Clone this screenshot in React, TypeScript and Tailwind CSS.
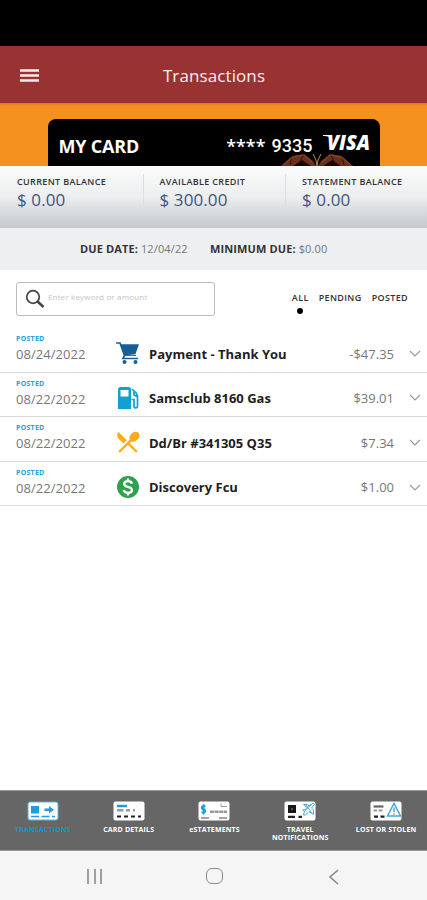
import type { ReactNode } from "react";
import { MdLocalDining } from "react-icons/md";

const balances = [
  { label: "CURRENT BALANCE", value: "$ 0.00" },
  { label: "AVAILABLE CREDIT", value: "$ 300.00" },
  { label: "STATEMENT BALANCE", value: "$ 0.00" },
];

function CartIcon() {
  return (
    <svg width="24" height="24" viewBox="0 0 24 24" fill="none">
      <path d="M0 2h4l4.500 12.500L7 17.500h15" stroke="#145f96" strokeWidth="1.700" />
      <path d="M4.500 3.200H23L19.500 13 8.300 14.500z" fill="#145f96" />
      <path d="M8 14.300h12" stroke="#145f96" strokeWidth="1.200" />
      <circle cx="8.500" cy="21" r="2" fill="#145f96" />
      <circle cx="19.500" cy="21" r="2" fill="#145f96" />
    </svg>
  );
}

function GasIcon() {
  return (
    <svg width="24" height="24" viewBox="0 0 24 24" fill="none">
      <path
        d="M4.500 1h8A2.500 2.500 0 0 1 15 3.500V23H2V3.500A2.500 2.500 0 0 1 4.500 1zM4.500 4v6.500h8V4z"
        fill="#12a0d0"
        fillRule="evenodd"
      />
      <path
        d="m16 3 4.500 4.500 1 3V20c0 2.500-3.500 2.500-3.500 0v-6.500h-2.500M18 5.500V9l3 1.500"
        stroke="#12a0d0"
        strokeWidth="1.700"
      />
    </svg>
  );
}

function CashIcon() {
  return (
    <svg width="24" height="24" viewBox="0 0 24 24" fill="none">
      <circle cx="12" cy="12" r="11" fill="#2fa04e" />
      <path
        d="M16 8.600C15.500 6.800 14 6.200 12 6.200c-2.300 0-3.800 1-3.800 2.700C8.200 13 16 10.800 16 15c0 1.800-1.600 2.800-4 2.800s-3.900-1-4.200-2.900M12 3.500v3M12 17.500v3"
        stroke="#fff"
        strokeWidth="2.300"
      />
    </svg>
  );
}

const transactions = [
  {
    date: "08/24/2022",
    name: "Payment - Thank You",
    amount: "-$47.35",
    icon: <CartIcon />,
  },
  {
    date: "08/22/2022",
    name: "Samsclub 8160 Gas",
    amount: "$39.01",
    icon: <GasIcon />,
  },
  {
    date: "08/22/2022",
    name: "Dd/Br #341305 Q35",
    amount: "$7.34",
    icon: <MdLocalDining size={28} color="#fbac18" className="-ml-0.5" />,
  },
  {
    date: "08/22/2022",
    name: "Discovery Fcu",
    amount: "$1.00",
    icon: <CashIcon />,
  },
];

function CardIcon({ children }: { children: ReactNode }) {
  return (
    <svg width="32" height="20" viewBox="0 0 32 20" fill="none">
      <rect x="0.500" y="0.500" width="31" height="19" rx="2" fill="#fff" />
      {children}
    </svg>
  );
}

const tabs = [
  {
    label: "TRANSACTIONS",
    active: true,
    icon: (
      <svg width="32" height="20" viewBox="0 0 32 20" fill="none">
        <rect x="1" y="1" width="30" height="18" rx="2" fill="#fff" stroke="#55b4e4" />
        <path d="M4 5h8v7.500H4z" fill="#1d9ce0" />
        <path d="M17.500 7.500H22V5l5 3.800-5 3.800v-2.500h-4.500z" fill="#1d9ce0" />
        <path d="M4 15.500h8M14.500 15.500h8M25 15.500h3" stroke="#1d9ce0" strokeWidth="1.600" />
      </svg>
    ),
  },
  {
    label: "CARD DETAILS",
    icon: (
      <CardIcon>
        <path d="M4 5h10" stroke="#1d9ce0" strokeWidth="2.500" />
        <path d="M4 9.300h6.500M13 9.300h4M20 9.300h2" stroke="#999" strokeWidth="2.500" />
        <path d="M4 15.500h4M11 15.500h4M18 15.500h4M25 15.500h3" stroke="#222" strokeWidth="2.200" />
      </CardIcon>
    ),
  },
  {
    label: "eSTATEMENTS",
    icon: (
      <CardIcon>
        <path
          d="M7.500 5.200H5.500C3.300 5.200 3.300 8.200 5.500 8.200S7.700 11.500 5.500 11.500H3.500M5.600 3.200v10.300"
          stroke="#1d9ce0"
          strokeWidth="1.800"
        />
        <path d="M12 10.800h17" stroke="#999" strokeWidth="2.500" strokeDasharray="4 .6" />
        <path d="M28.500 5.500h-5.500V2.500M23 5.500h6" stroke="#999" />
        <path d="M3 17h8M21 17h8" stroke="#888" strokeWidth="1.500" />
      </CardIcon>
    ),
  },
  {
    label: "TRAVEL NOTIFICATIONS",
    icon: (
      <CardIcon>
        <path d="M4 4h8v8H4z" fill="#171717" />
        <path d="M7 7h2v2H7z" fill="#555" />
        <path d="M4 15.800h7M14.500 15.800H18" stroke="#222" strokeWidth="2.200" />
        <path
          d="M19.500 3.500h4l2 2 3.500-3.500 1.500 1.500L27.500 7l2 2v4.500L25 10.500l-3.500 3.500h-2l1-3.500L18.500 9l3-.5 1.500-2zM22 4l6 8M27 3l-7 8"
          stroke="#4ba9dd"
          strokeWidth="1"
        />
      </CardIcon>
    ),
  },
  {
    label: "LOST OR STOLEN",
    icon: (
      <CardIcon>
        <path d="M3.500 5.500h10" stroke="#666" strokeWidth="2.200" />
        <path d="M3.500 9.500h3.500M8.500 9.500h4" stroke="#999" strokeWidth="2.200" />
        <path d="M4 15.700h4M10.500 15.700h4" stroke="#222" strokeWidth="2.200" />
        <path d="M24 2.300 30.500 15H17.500z" fill="#fff" stroke="#45a7de" strokeWidth="1.500" />
        <path d="M24 6.500V11M24 12.200v1.500" stroke="#45a7de" strokeWidth="1.400" />
      </CardIcon>
    ),
  },
];

export default function App() {
  return (
    <div className="flex h-[900px] w-[427px] flex-col overflow-hidden bg-white font-['Open_Sans',sans-serif] text-[#333]">
      <div className="h-[46px] shrink-0 bg-black" />
      <header className="grid h-[57px] shrink-0 grid-cols-[60px_1fr_60px] items-center bg-[#993333] text-white">
        <svg className="mt-0.5 ml-5" width="20" height="14" viewBox="0 0 20 14">
          <path d="M0 1.500h19M0 6.500h19M0 11.500h19" stroke="#f9eaea" strokeWidth="2.300" />
        </svg>
        <h1 className="pt-0.5 pl-px text-center text-[17px] tracking-[0.1px] text-[#f9eded]">Transactions</h1>
      </header>

      <div className="flex h-[63px] shrink-0 justify-center bg-linear-to-b from-[#d67a22] to-[#f5911f] to-5% pt-4">
        <div className="relative flex h-[47px] w-[332px] items-center rounded-t-[8px] bg-black pr-[7px] pl-[11px] text-white">
          {/* butterfly artwork, cropped by the balance bar */}
          <svg className="absolute bottom-0 left-[232px]" width="74" height="14" viewBox="0 0 74 14">
            <path d="M1 14 12 4l12-2 9 7 3 5zM73 14 62 4 50 2l-9 7-3 5z" fill="#6b301c" />
            <path d="m13 14 9-6 9 6M61 14l-9-6-9 6" fill="#150805" />
            <path d="m12 4-2 9M24 2l-4 7M62 4l2 9M50 2l4 7" stroke="#2a100a" />
            <path d="m3 13 10-8 11-2 8 7M71 13 61 5 50 3l-8 7" stroke="#8d492b" fill="none" />
            <path d="m33 2 3 6 1 6 1-6 3-6" stroke="#b78a4c" fill="none" />
          </svg>
          <span className="relative pt-[7px] text-[18px] font-bold tracking-[-0.2px]">MY CARD</span>
          <span className="relative ml-auto pt-[7px] text-[18px] font-semibold">****</span>
          <span className="relative ml-1.5 pt-[6px] font-['Roboto',sans-serif] text-[18px] font-medium">9335</span>
          <svg className="relative ml-[9px] shrink-0" width="51" height="36" viewBox="0 0 51 36">
            <text
              x="5"
              y="25"
              textLength="43"
              lengthAdjust="spacingAndGlyphs"
              fill="#fff"
              className="font-['Open_Sans',sans-serif] text-[21px] font-extrabold italic"
            >
              VISA
            </text>
            <path d="M1 10h8l2 6C9 12 6 11 1 11z" fill="#fff" />
          </svg>
        </div>
      </div>

      <section className="flex h-[62px] shrink-0 bg-linear-to-b from-[#fbfcfc] via-[#eceeef] to-[#c3c8cb] pt-2">
        {balances.map((balance, i) => (
          <div key={balance.label} className="flex w-[142.500px] shrink-0">
            <div className={i ? "h-8 w-px bg-[#dcdfe1]" : "h-8 w-px"} />
            <div className="pl-4">
              <div className="text-[9px] leading-4 font-semibold tracking-[0.35px] whitespace-nowrap">
                {balance.label}
              </div>
              <div className="text-[17px] leading-5 tracking-[0.1px] text-[#42547f]">{balance.value}</div>
            </div>
          </div>
        ))}
      </section>

      <section className="flex h-[42px] shrink-0 items-center bg-[#edeff0] pl-[80px] text-[11px] tracking-[0.12px] text-[#777]">
        <span className="w-[130px]">
          <b className="text-[#333]">DUE DATE:</b> 12/04/22
        </span>
        <span>
          <b className="text-[#333]">MINIMUM DUE:</b> $0.00
        </span>
      </section>

      <div className="flex h-[58px] shrink-0 pr-[19px] pl-4 pt-3">
        <div className="flex h-[34px] w-[199px] items-center rounded-[3px] border border-[#bbb] pl-2">
          <svg width="20" height="20" viewBox="0 0 20 20" fill="none" stroke="#444">
            <circle cx="8" cy="8" r="6.300" strokeWidth="1.700" />
            <path d="m12.500 12.500 6 5.500" strokeWidth="2.500" />
          </svg>
          <span className="pb-1 pl-[3px] text-[8px] tracking-[0.17px] text-[#c4c4c4]">Enter keyword or amount</span>
        </div>
        <div className="ml-auto flex gap-[10px] pt-2 text-[9px] leading-4 font-semibold tracking-[0.35px]">
          <div className="flex flex-col items-center">
            ALL
            <i className="mt-[2px] h-1.5 w-1.5 rounded-full bg-black" />
          </div>
          <span>PENDING</span>
          <span>POSTED</span>
        </div>
      </div>

      <main className="flex grow flex-col">
        {transactions.map((item) => (
          <div
            key={item.name}
            className="grid h-[44.600px] grid-cols-[100px_33px_1fr_auto_12px] items-center border-b border-[#d9d9d9] pr-1.5 pl-4"
          >
            <div className="self-start pt-[5px]">
              <div className="text-[7px] leading-[11px] font-bold tracking-[0.25px] text-[#2b9ed8]">POSTED</div>
              <div className="text-[13px] leading-5 tracking-[0.05px] text-[#777]">{item.date}</div>
            </div>
            <div className="pt-[7px]">{item.icon}</div>
            <div className="pt-[9px] text-[13px] font-bold whitespace-nowrap text-[#1e1e1e]">{item.name}</div>
            <div className="pt-[9px] pr-[15px] text-[13px] text-[#777]">{item.amount}</div>
            <svg className="mt-2" width="12" height="8" viewBox="0 0 12 8">
              <path d="m1 1 5 5 5-5" fill="none" stroke="#999" strokeWidth="1.200" />
            </svg>
          </div>
        ))}
      </main>

      <nav className="-mr-0.5 grid h-[61px] shrink-0 grid-cols-5 border-y border-[#999] bg-[#666] pt-[10px] text-white">
        {tabs.map((tab) => (
          <div key={tab.label} className="flex flex-col items-center gap-[5px]">
            {tab.icon}
            <span
              className={`max-w-[68px] text-center text-[7px] leading-2 font-bold tracking-[0.16px] ${tab.active ? "text-[#1593d2]" : ""}`}
            >
              {tab.label}
            </span>
          </div>
        ))}
      </nav>

      <footer className="grid h-[49px] shrink-0 grid-cols-[190px_49px_1fr] items-center bg-[#f5f5f5]">
        <svg className="mt-0.5 justify-self-center" width="18" height="18" viewBox="0 0 18 18">
          <path d="M2 1v15M9 1v15M15 1v15" stroke="#909090" strokeWidth="1.700" />
        </svg>
        <div className="h-4 w-[17px] justify-self-center rounded-[6px] border-[1.500px] border-[#888]" />
        <svg className="mt-0.5 ml-[89px]" width="12" height="18" viewBox="0 0 12 18">
          <path d="M10 2 2 9l8 7" fill="none" stroke="#888" strokeWidth="1.600" />
        </svg>
      </footer>
    </div>
  );
}
